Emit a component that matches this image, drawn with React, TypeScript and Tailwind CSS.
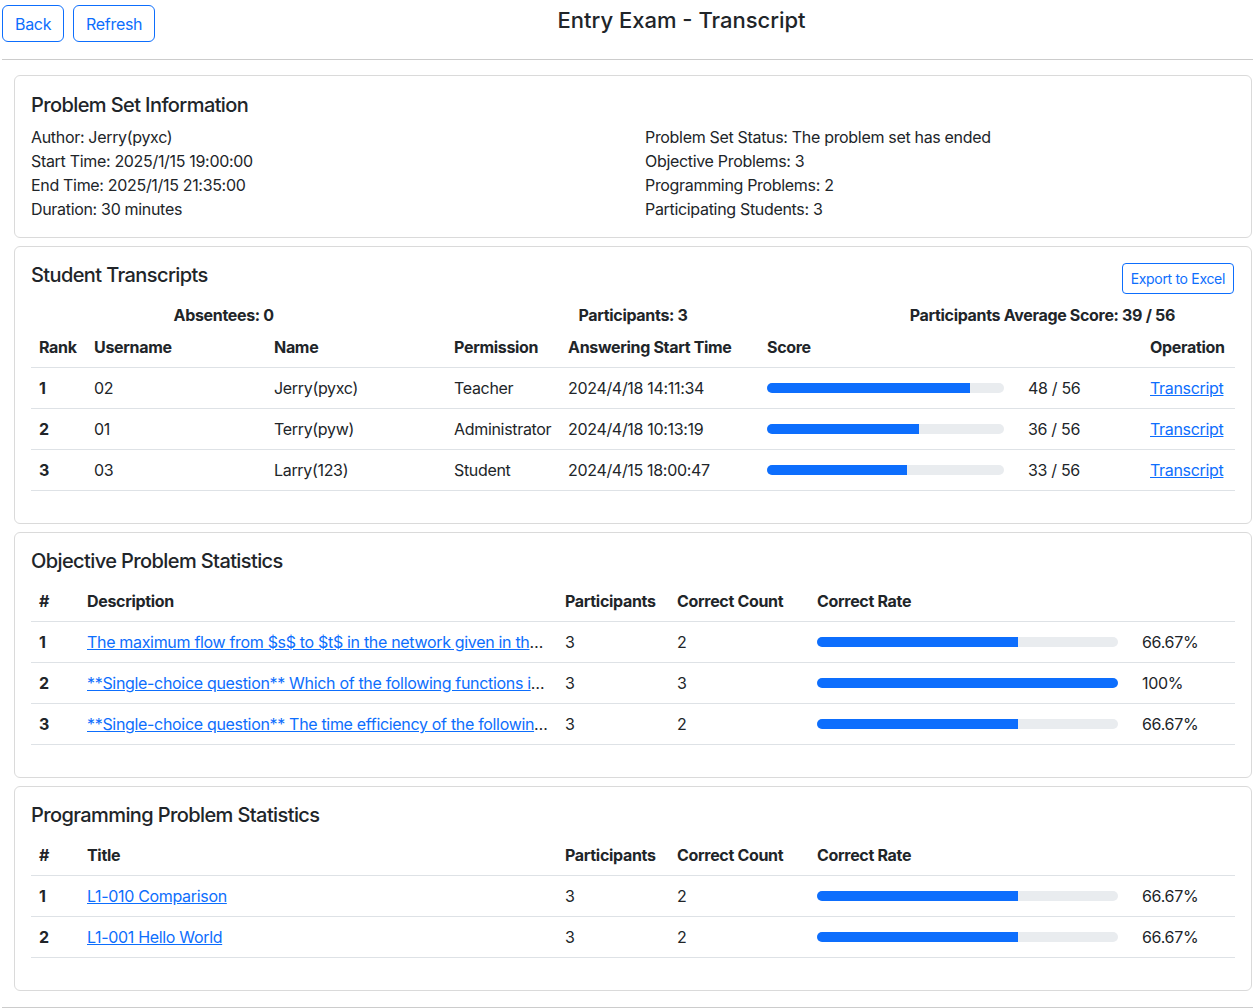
const students = [
  { rank: 1, username: "02", name: "Jerry(pyxc)", permission: "Teacher", start: "2024/4/18 14:11:34", score: 48 },
  { rank: 2, username: "01", name: "Terry(pyw)", permission: "Administrator", start: "2024/4/18 10:13:19", score: 36 },
  { rank: 3, username: "03", name: "Larry(123)", permission: "Student", start: "2024/4/15 18:00:47", score: 33 },
];

const objective = [
  { id: 1, desc: "The maximum flow from $s$ to $t$ in the network given in the figure below is", participants: 3, correct: 2, rate: 66.67 },
  { id: 2, desc: "**Single-choice question** Which of the following functions is not a valid function", participants: 3, correct: 3, rate: 100 },
  { id: 3, desc: "**Single-choice question** The time efficiency of the following algorithm is", participants: 3, correct: 2, rate: 66.67 },
];

const programming = [
  { id: 1, title: "L1-010 Comparison", participants: 3, correct: 2, rate: 66.67 },
  { id: 2, title: "L1-001 Hello World", participants: 3, correct: 2, rate: 66.67 },
];

function Progress({ value, width }: { value: number; width: string }) {
  return (
    <div className={`h-[10px] ${width} shrink-0 rounded-[5px] bg-[#e9ecef] overflow-hidden`}>
      <div className="h-full bg-[#0d6efd]" style={{ width: `${value}%` }} />
    </div>
  );
}

function Card({ children }: { children: React.ReactNode }) {
  return <div className="mb-2 rounded-md border border-[#dadada] bg-white px-4 pt-4 pb-4">{children}</div>;
}

const th = "px-2 py-2 text-left font-bold border-b border-[#dee2e6]";
const td = "px-2 py-2 border-b border-[#dee2e6]";

function StatsTable({
  label,
  rows,
}: {
  label: string;
  rows: { id: number; text: string; participants: number; correct: number; rate: number }[];
}) {
  return (
    <table className="mb-4 w-full table-fixed border-collapse">
      <colgroup>
        <col className="w-[48px]" />
        <col className="w-[478px]" />
        <col className="w-[112px]" />
        <col className="w-[140px]" />
        <col />
      </colgroup>
      <thead>
        <tr>
          <th className={th}>#</th>
          <th className={th}>{label}</th>
          <th className={th}>Participants</th>
          <th className={th}>Correct Count</th>
          <th className={th}>Correct Rate</th>
        </tr>
      </thead>
      <tbody>
        {rows.map((r) => (
          <tr key={r.id}>
            <td className={`${td} font-bold`}>{r.id}</td>
            <td className={td}>
              <div className="truncate">
                <a href="#" className="text-[#0d6efd] underline">
                  {r.text}
                </a>
              </div>
            </td>
            <td className={td}>{r.participants}</td>
            <td className={td}>{r.correct}</td>
            <td className={td}>
              <div className="flex items-center gap-6">
                <Progress value={r.rate} width="w-[301px]" />
                <span>{r.rate}%</span>
              </div>
            </td>
          </tr>
        ))}
      </tbody>
    </table>
  );
}

export default function App() {
  return (
    <div className="min-h-screen bg-white pl-[2px] text-[16px] leading-6 tracking-[-0.02em] text-[#212529] font-['Inter','Liberation_Sans',sans-serif]">
      <div className="flex items-start pt-[5px]">
        <div className="flex gap-[9px]">
          <button className="h-[37px] rounded-md border border-[#0d6efd] px-3 text-[#0d6efd]">Back</button>
          <button className="h-[37px] rounded-md border border-[#0d6efd] px-3 text-[#0d6efd]">Refresh</button>
        </div>
        <h3 className="flex-1 pr-[45px] text-center text-[22px] font-medium leading-[30px] tracking-normal">Entry Exam - Transcript</h3>
      </div>
      <hr className="mt-[17px] border-t border-[#cccccc]" />

      <div className="mt-[15px] pl-3 pr-px">
        <Card>
          <h5 className="mt-px mb-2 text-xl font-medium leading-6 tracking-[-0.03em]">Problem Set Information</h5>
          <div className="grid grid-cols-2 gap-x-6">
            <div>
              <div>Author: Jerry(pyxc)</div>
              <div>Start Time: 2025/1/15 19:00:00</div>
              <div>End Time: 2025/1/15 21:35:00</div>
              <div>Duration: 30 minutes</div>
            </div>
            <div>
              <div>Problem Set Status: The problem set has ended</div>
              <div>Objective Problems: 3</div>
              <div>Programming Problems: 2</div>
              <div>Participating Students: 3</div>
            </div>
          </div>
        </Card>

        <Card>
          <div className="mb-[9px] flex items-start justify-between">
            <h5 className="text-xl font-medium leading-6 tracking-[-0.03em]">Student Transcripts</h5>
            <button className="mr-px h-[31px] rounded border border-[#0d6efd] px-2 text-sm text-[#0d6efd]">Export to Excel</button>
          </div>
          <div className="-mx-3 grid grid-cols-3 text-center font-bold">
            <div>Absentees: 0</div>
            <div>Participants: 3</div>
            <div>Participants Average Score: 39 / 56</div>
          </div>
          <table className="mb-4 w-full table-fixed border-collapse">
            <colgroup>
              <col className="w-[55px]" />
              <col className="w-[180px]" />
              <col className="w-[180px]" />
              <col className="w-[114px]" />
              <col className="w-[199px]" />
              <col className="w-[383px]" />
              <col />
            </colgroup>
            <thead>
              <tr>
                <th className={th}>Rank</th>
                <th className={th}>Username</th>
                <th className={th}>Name</th>
                <th className={th}>Permission</th>
                <th className={th}>Answering Start Time</th>
                <th className={th}>Score</th>
                <th className={th}>Operation</th>
              </tr>
            </thead>
            <tbody>
              {students.map((s) => (
                <tr key={s.rank}>
                  <td className={`${td} font-bold`}>{s.rank}</td>
                  <td className={td}>{s.username}</td>
                  <td className={td}>{s.name}</td>
                  <td className={td}>{s.permission}</td>
                  <td className={td}>{s.start}</td>
                  <td className={td}>
                    <div className="flex items-center gap-6">
                      <Progress value={(s.score / 56) * 100} width="w-[237px]" />
                      <span>{s.score} / 56</span>
                    </div>
                  </td>
                  <td className={td}>
                    <a href="#" className="text-[#0d6efd] underline">
                      Transcript
                    </a>
                  </td>
                </tr>
              ))}
            </tbody>
          </table>
        </Card>

        <Card>
          <h5 className="mb-2 text-xl font-medium leading-6 tracking-[-0.03em]">Objective Problem Statistics</h5>
          <StatsTable
            label="Description"
            rows={objective.map((o) => ({ id: o.id, text: o.desc, participants: o.participants, correct: o.correct, rate: o.rate }))}
          />
        </Card>

        <Card>
          <h5 className="mb-2 text-xl font-medium leading-6 tracking-[-0.03em]">Programming Problem Statistics</h5>
          <StatsTable
            label="Title"
            rows={programming.map((p) => ({ id: p.id, text: p.title, participants: p.participants, correct: p.correct, rate: p.rate }))}
          />
        </Card>
      </div>
      <hr className="mt-4 border-t border-[#cccccc]" />
    </div>
  );
}
